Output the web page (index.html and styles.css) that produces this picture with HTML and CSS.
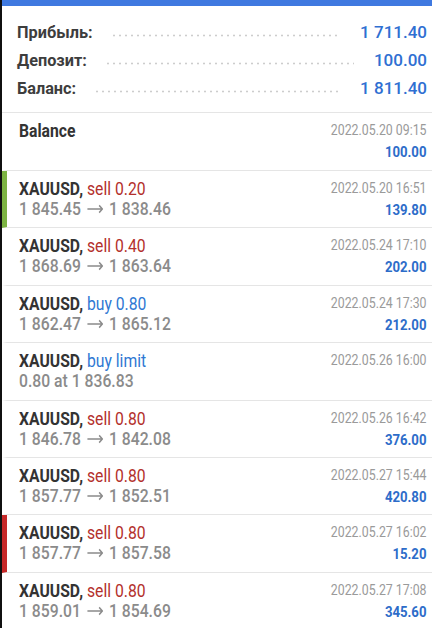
FILE: index.html
```html
<!DOCTYPE html>
<html lang="ru">
<head>
<meta charset="utf-8">
<title>History</title>
<link rel="stylesheet" href="styles.css">
</head>
<body>
<div class="screen">
  <div class="topbar"></div>
  <section class="summary">
    <div class="sum-row"><span class="sum-label">Прибыль:</span><span class="dots"></span><span class="sum-value">1 711.40</span></div>
    <div class="sum-row"><span class="sum-label">Депозит:</span><span class="dots"></span><span class="sum-value">100.00</span></div>
    <div class="sum-row"><span class="sum-label">Баланс:</span><span class="dots"></span><span class="sum-value">1 811.40</span></div>
  </section>
  <ul class="list">
    <li class="row row-balance">
      <div class="left">
        <div class="line title cond"><b>Balance</b></div>
      </div>
      <div class="right">
        <div class="date cond-r">2022.05.20 09:15</div>
        <div class="amount cond-r">100.00</div>
      </div>
    </li>
    <li class="row mark-green">
      <div class="left">
        <div class="line title cond"><b>XAUUSD,</b> <span class="sell">sell 0.20</span></div>
        <div class="line price cond">1 845.45<svg class="arrow" viewBox="0 0 19 10"><path d="M0.5 5H18M14.3 1.4L18 5L14.3 8.6"/></svg>1 838.46</div>
      </div>
      <div class="right">
        <div class="date cond-r">2022.05.20 16:51</div>
        <div class="amount cond-r">139.80</div>
      </div>
    </li>
    <li class="row">
      <div class="left">
        <div class="line title cond"><b>XAUUSD,</b> <span class="sell">sell 0.40</span></div>
        <div class="line price cond">1 868.69<svg class="arrow" viewBox="0 0 19 10"><path d="M0.5 5H18M14.3 1.4L18 5L14.3 8.6"/></svg>1 863.64</div>
      </div>
      <div class="right">
        <div class="date cond-r">2022.05.24 17:10</div>
        <div class="amount cond-r">202.00</div>
      </div>
    </li>
    <li class="row">
      <div class="left">
        <div class="line title cond"><b>XAUUSD,</b> <span class="buy">buy 0.80</span></div>
        <div class="line price cond">1 862.47<svg class="arrow" viewBox="0 0 19 10"><path d="M0.5 5H18M14.3 1.4L18 5L14.3 8.6"/></svg>1 865.12</div>
      </div>
      <div class="right">
        <div class="date cond-r">2022.05.24 17:30</div>
        <div class="amount cond-r">212.00</div>
      </div>
    </li>
    <li class="row">
      <div class="left">
        <div class="line title cond"><b>XAUUSD,</b> <span class="buy">buy limit</span></div>
        <div class="line price cond">0.80 at 1 836.83</div>
      </div>
      <div class="right">
        <div class="date cond-r">2022.05.26 16:00</div>
      </div>
    </li>
    <li class="row">
      <div class="left">
        <div class="line title cond"><b>XAUUSD,</b> <span class="sell">sell 0.80</span></div>
        <div class="line price cond">1 846.78<svg class="arrow" viewBox="0 0 19 10"><path d="M0.5 5H18M14.3 1.4L18 5L14.3 8.6"/></svg>1 842.08</div>
      </div>
      <div class="right">
        <div class="date cond-r">2022.05.26 16:42</div>
        <div class="amount cond-r">376.00</div>
      </div>
    </li>
    <li class="row">
      <div class="left">
        <div class="line title cond"><b>XAUUSD,</b> <span class="sell">sell 0.80</span></div>
        <div class="line price cond">1 857.77<svg class="arrow" viewBox="0 0 19 10"><path d="M0.5 5H18M14.3 1.4L18 5L14.3 8.6"/></svg>1 852.51</div>
      </div>
      <div class="right">
        <div class="date cond-r">2022.05.27 15:44</div>
        <div class="amount cond-r">420.80</div>
      </div>
    </li>
    <li class="row mark-red">
      <div class="left">
        <div class="line title cond"><b>XAUUSD,</b> <span class="sell">sell 0.80</span></div>
        <div class="line price cond">1 857.77<svg class="arrow" viewBox="0 0 19 10"><path d="M0.5 5H18M14.3 1.4L18 5L14.3 8.6"/></svg>1 857.58</div>
      </div>
      <div class="right">
        <div class="date cond-r">2022.05.27 16:02</div>
        <div class="amount cond-r">15.20</div>
      </div>
    </li>
    <li class="row">
      <div class="left">
        <div class="line title cond"><b>XAUUSD,</b> <span class="sell">sell 0.80</span></div>
        <div class="line price cond">1 859.01<svg class="arrow" viewBox="0 0 19 10"><path d="M0.5 5H18M14.3 1.4L18 5L14.3 8.6"/></svg>1 854.69</div>
      </div>
      <div class="right">
        <div class="date cond-r">2022.05.27 17:08</div>
        <div class="amount cond-r">345.60</div>
      </div>
    </li>
  </ul>
</div>
</body>
</html>
```

FILE: styles.css
```css
html, body {
  margin: 0;
  padding: 0;
  background: #ffffff;
}
body {
  font-family: Roboto, "Noto Sans", "Liberation Sans", sans-serif;
  color: #3a3a3a;
  overflow: hidden;
}
.screen {
  border-left: 2px solid #101010;
  height: 628px;
  box-sizing: border-box;
  background: #ffffff;
}
.topbar {
  height: 6px;
  background: #3f79e0;
}
.summary {
  padding: 12px 5px 10px 15px;
  border-bottom: 1px solid #e5e5e5;
}
.sum-row {
  display: flex;
  align-items: center;
  height: 28px;
}
.sum-label {
  font-size: 16.3px;
  font-weight: 700;
  color: #3d3d3d;
}
.dots {
  flex: 1;
  height: 3px;
  margin: 6px 20px 0 18px;
  background-image: radial-gradient(circle, #cdcdcd 0.9px, transparent 1.2px);
  background-size: 6px 3px;
  background-repeat: repeat-x;
}
.sum-value {
  font-size: 17px;
  font-weight: 500;
  color: #2f6fd2;
}
.list {
  list-style: none;
  margin: 0;
  padding: 0;
}
.row {
  display: flex;
  justify-content: space-between;
  height: 57.4px;
  box-sizing: border-box;
  padding: 8px 6px 0 12px;
  border-left: 5px solid #ffffff;
  border-bottom: 1px solid #e5e5e5;
}
.row-balance {
  height: 58px;
}
.mark-green { border-left-color: #7cb342; }
.mark-red { border-left-color: #c62828; }
.left, .right {
  flex: 1;
}
.line {
  height: 20px;
  line-height: 20px;
  white-space: nowrap;
}
.cond {
  transform: scaleX(0.85);
  transform-origin: left center;
}
.cond-r {
  transform: scaleX(0.85);
  transform-origin: right center;
  text-align: right;
  white-space: nowrap;
}
.title {
  font-size: 18.5px;
  color: #333333;
}
.title b { font-weight: 700; }
.sell { color: #b3302c; }
.buy { color: #2f78d3; }
.price {
  font-size: 18.5px;
  font-weight: 500;
  color: #8b8b8b;
}
.arrow {
  width: 19px;
  height: 10px;
  margin: 0 7px;
  vertical-align: 1px;
}
.arrow path {
  fill: none;
  stroke: #8b8b8b;
  stroke-width: 1.7;
}
.date {
  font-size: 14.5px;
  line-height: 20px;
  color: #9a9a9a;
}
.amount {
  font-size: 15.5px;
  font-weight: 700;
  line-height: 22px;
  color: #2d6cc9;
}
```
